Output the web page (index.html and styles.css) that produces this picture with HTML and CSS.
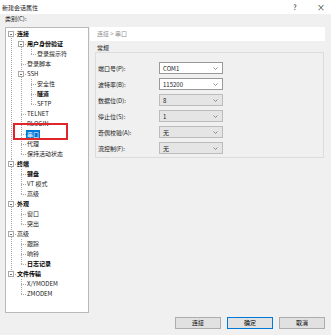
FILE: index.html
```html
<!DOCTYPE html>
<html lang="zh-CN">
<head>
    <meta charset="UTF-8">
    <title>新建会话属性</title>
    <link rel="stylesheet" href="styles.css">
</head>
<body>
<div class="dialog">
    <!-- Title bar -->
    <div class="titlebar">
        <span class="title">新建会话属性</span>
        <span class="help">?</span>
        <span class="close">×</span>
    </div>

    <div class="content">
        <div class="cat-label">类别(C):</div>

        <div class="main">
            <!-- Category tree -->
            <div class="tree">
                <ul>
                    <li><div class="node bold"><i class="exp"></i>连接</div>
                        <ul>
                            <li><div class="node bold"><i class="exp"></i>用户身份验证</div>
                                <ul>
                                    <li><div class="node">登录提示符</div></li>
                                </ul>
                            </li>
                            <li><div class="node">登录脚本</div></li>
                            <li><div class="node"><i class="exp"></i>SSH</div>
                                <ul>
                                    <li><div class="node">安全性</div></li>
                                    <li><div class="node bold">隧道</div></li>
                                    <li><div class="node">SFTP</div></li>
                                </ul>
                            </li>
                            <li><div class="node">TELNET</div></li>
                            <li><div class="node">RLOGIN</div></li>
                            <li><div class="node sel"><span>串口</span></div></li>
                            <li><div class="node">代理</div></li>
                            <li><div class="node">保持活动状态</div></li>
                        </ul>
                    </li>
                    <li><div class="node bold"><i class="exp"></i>终端</div>
                        <ul>
                            <li><div class="node bold">键盘</div></li>
                            <li><div class="node">VT 模式</div></li>
                            <li><div class="node">高级</div></li>
                        </ul>
                    </li>
                    <li><div class="node bold"><i class="exp"></i>外观</div>
                        <ul>
                            <li><div class="node">窗口</div></li>
                            <li><div class="node">突出</div></li>
                        </ul>
                    </li>
                    <li><div class="node"><i class="exp"></i>高级</div>
                        <ul>
                            <li><div class="node">跟踪</div></li>
                            <li><div class="node">响铃</div></li>
                            <li><div class="node bold">日志记录</div></li>
                        </ul>
                    </li>
                    <li><div class="node bold"><i class="exp"></i>文件传输</div>
                        <ul>
                            <li><div class="node">X/YMODEM</div></li>
                            <li><div class="node">ZMODEM</div></li>
                        </ul>
                    </li>
                </ul>
            </div>

            <!-- Settings panel -->
            <div class="panel">
                <div class="crumb">连接 &gt; 串口</div>
                <div class="group-title">常规</div>
                <div class="group">
                    <div class="row">
                        <label>端口号(P):</label>
                        <div class="select white"><span>COM1</span><svg width="5" height="3" viewBox="0 0 5 3"><polyline points="0.5,0.5 2.5,2.5 4.5,0.5" fill="none" stroke="#777" stroke-width="0.8"/></svg></div>
                    </div>
                    <div class="row">
                        <label>波特率(B):</label>
                        <div class="select white"><span>115200</span><svg width="5" height="3" viewBox="0 0 5 3"><polyline points="0.5,0.5 2.5,2.5 4.5,0.5" fill="none" stroke="#777" stroke-width="0.8"/></svg></div>
                    </div>
                    <div class="row">
                        <label>数据位(D):</label>
                        <div class="select"><span>8</span><svg width="5" height="3" viewBox="0 0 5 3"><polyline points="0.5,0.5 2.5,2.5 4.5,0.5" fill="none" stroke="#777" stroke-width="0.8"/></svg></div>
                    </div>
                    <div class="row">
                        <label>停止位(S):</label>
                        <div class="select"><span>1</span><svg width="5" height="3" viewBox="0 0 5 3"><polyline points="0.5,0.5 2.5,2.5 4.5,0.5" fill="none" stroke="#777" stroke-width="0.8"/></svg></div>
                    </div>
                    <div class="row">
                        <label>奇偶校验(A):</label>
                        <div class="select"><span>无</span><svg width="5" height="3" viewBox="0 0 5 3"><polyline points="0.5,0.5 2.5,2.5 4.5,0.5" fill="none" stroke="#777" stroke-width="0.8"/></svg></div>
                    </div>
                    <div class="row">
                        <label>流控制(F):</label>
                        <div class="select"><span>无</span><svg width="5" height="3" viewBox="0 0 5 3"><polyline points="0.5,0.5 2.5,2.5 4.5,0.5" fill="none" stroke="#777" stroke-width="0.8"/></svg></div>
                    </div>
                </div>
            </div>
        </div>

        <!-- Dialog buttons -->
        <div class="footer">
            <button class="btn">连接</button>
            <button class="btn default">确定</button>
            <button class="btn">取消</button>
        </div>
    </div>

    <!-- Annotation around the selected item -->
    <div class="mark"></div>
</div>
</body>
</html>
```

FILE: styles.css
```css
* {
    box-sizing: border-box;
}
body {
    margin: 0;
    width: 331px;
    height: 335px;
    overflow: hidden;
    background: #f0f0f0;
    font-family: "Noto Sans CJK SC", "Noto Sans", sans-serif;
    font-size: 6px;
    color: #1a1a1a;
}
.dialog {
    position: relative;
    height: 335px;
}

/* title bar */
.titlebar {
    height: 14px;
    background: #fff;
    display: flex;
    align-items: center;
    padding-left: 2px;
}
.title {
    flex: 1;
}
.help {
    width: 10px;
    margin-right: 11px;
    text-align: center;
    font-size: 7px;
}
.close {
    width: 20px;
    text-align: center;
    font-size: 10px;
    font-family: "DejaVu Sans", sans-serif;
    font-weight: 300;
}

.content {
    padding: 0 6px 0 5px;
}
.cat-label {
    height: 13px;
    line-height: 9px;
}
.main {
    display: flex;
    height: 286px;
}

/* tree - dotted connector lines drawn as backgrounds */
.tree {
    width: 84px;
    background: #fff;
    border: 1px solid #b9b9b9;
    padding-top: 1px;
}
.tree ul {
    list-style: none;
    margin: 0;
    padding: 0 0 0 4px;
}
.tree > ul {
    padding-left: 5px;
}
.tree li {
    padding-left: 6px;
    background:
        repeating-linear-gradient(to bottom, #a8a8a8 0 1px, transparent 1px 2px) 0 0 / 1px 100% no-repeat,
        repeating-linear-gradient(to right, #a8a8a8 0 1px, transparent 1px 2px) 0 5px / 5px 1px no-repeat;
}
.tree li:last-child {
    background:
        repeating-linear-gradient(to bottom, #a8a8a8 0 1px, transparent 1px 2px) 0 0 / 1px 6px no-repeat,
        repeating-linear-gradient(to right, #a8a8a8 0 1px, transparent 1px 2px) 0 5px / 5px 1px no-repeat;
}
.tree > ul > li:first-child {
    background:
        repeating-linear-gradient(to bottom, #a8a8a8 0 1px, transparent 1px 2px) 0 5px / 1px 100% no-repeat,
        repeating-linear-gradient(to right, #a8a8a8 0 1px, transparent 1px 2px) 0 5px / 5px 1px no-repeat;
}
.node {
    display: flex;
    align-items: center;
    height: 10px;
    line-height: 10px;
    white-space: nowrap;
}
.node.bold {
    font-weight: bold;
    color: #000;
}
.exp {
    flex: none;
    width: 6px;
    height: 6px;
    margin-left: -9px;
    margin-right: 3px;
    border: 1px solid #a8a8a8;
    background: #fff linear-gradient(#707070, #707070) center / 2px 1px no-repeat;
}
.node.sel span {
    margin-left: -1px;
    padding: 0 1px;
    line-height: 9px;
    background: #0078d7;
    color: #fff;
}

/* right panel */
.panel {
    flex: 1;
    margin-left: 1px;
}
.crumb {
    height: 14px;
    line-height: 14px;
    background: #fff;
    color: #8c8c8c;
    padding-left: 7px;
}
.group-title {
    margin-top: 2px;
    height: 9px;
    line-height: 9px;
    padding-left: 7px;
}
.group {
    margin: 0 1px 0 5px;
    height: 106px;
    border: 1px solid #dcdcdc;
    padding: 7px 0 0 2px;
}
.row {
    display: flex;
    align-items: center;
    height: 16px;
}
.row label {
    width: 61px;
}
.select {
    width: 64px;
    height: 12px;
    display: flex;
    align-items: center;
    justify-content: space-between;
    padding: 0 4px 0 3px;
    border: 1px solid #bcbcbc;
    background: #e5e5e5;
}
.select.white {
    background: #fff;
    border-color: #999;
}

/* buttons */
.footer {
    display: flex;
    justify-content: flex-end;
    gap: 6px;
    margin-top: 4px;
}
.btn {
    width: 46px;
    height: 12px;
    padding: 0;
    border: 1px solid #adadad;
    background: #e1e1e1;
    font-family: inherit;
    font-size: 6px;
    line-height: 10px;
    color: #000;
}
.btn.default {
    border-color: #0078d7;
}

/* red annotation box */
.mark {
    position: absolute;
    left: 13px;
    top: 123px;
    width: 55px;
    height: 17px;
    border: 2px solid #e0262b;
}
```
